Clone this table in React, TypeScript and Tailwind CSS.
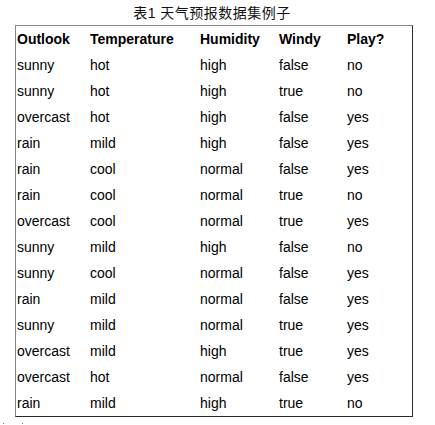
const header = ['Outlook', 'Temperature', 'Humidity', 'Windy', 'Play?']

const rows: string[][] = [
  ['sunny', 'hot', 'high', 'false', 'no'],
  ['sunny', 'hot', 'high', 'true', 'no'],
  ['overcast', 'hot', 'high', 'false', 'yes'],
  ['rain', 'mild', 'high', 'false', 'yes'],
  ['rain', 'cool', 'normal', 'false', 'yes'],
  ['rain', 'cool', 'normal', 'true', 'no'],
  ['overcast', 'cool', 'normal', 'true', 'yes'],
  ['sunny', 'mild', 'high', 'false', 'no'],
  ['sunny', 'cool', 'normal', 'false', 'yes'],
  ['rain', 'mild', 'normal', 'false', 'yes'],
  ['sunny', 'mild', 'normal', 'true', 'yes'],
  ['overcast', 'mild', 'high', 'true', 'yes'],
  ['overcast', 'hot', 'normal', 'false', 'yes'],
  ['rain', 'mild', 'high', 'true', 'no'],
]

const colWidths = ['w-[73px]', 'w-[110px]', 'w-[79px]', 'w-[68px]', 'flex-1']

function Row({ cells, bold }: { cells: string[]; bold?: boolean }) {
  return (
    <div className={'flex h-[26px] items-center ' + (bold ? 'font-bold' : '')}>
      {cells.map((c, i) => (
        <div key={i} className={colWidths[i] + ' pl-px'}>
          {c}
        </div>
      ))}
    </div>
  )
}

export default function App() {
  return (
    <div className="relative h-[425px] w-[435px] bg-white text-black" style={{ fontFamily: '"Liberation Sans", Arial, "Noto Sans CJK SC", sans-serif' }}>
      <div className="ml-[15px] w-[398px]">
        <div className="flex h-[25px] items-center justify-center pr-[4px] text-[14px] leading-none tracking-[0.5px] text-[#111]">表1 天气预报数据集例子</div>
        <div className="border border-t-[#888] border-l-[#888] border-r-[#2a2a2a] border-b-[#2a2a2a] text-[14px] leading-none">
          <Row cells={header} bold />
          {rows.map((r, i) => (
            <Row key={i} cells={r} />
          ))}
        </div>
      </div>
      <div className="absolute left-[3px] top-[423px] h-px w-px bg-gray-500" />
      <div className="absolute left-[22px] top-[423px] h-px w-px bg-gray-500" />
    </div>
  )
}
